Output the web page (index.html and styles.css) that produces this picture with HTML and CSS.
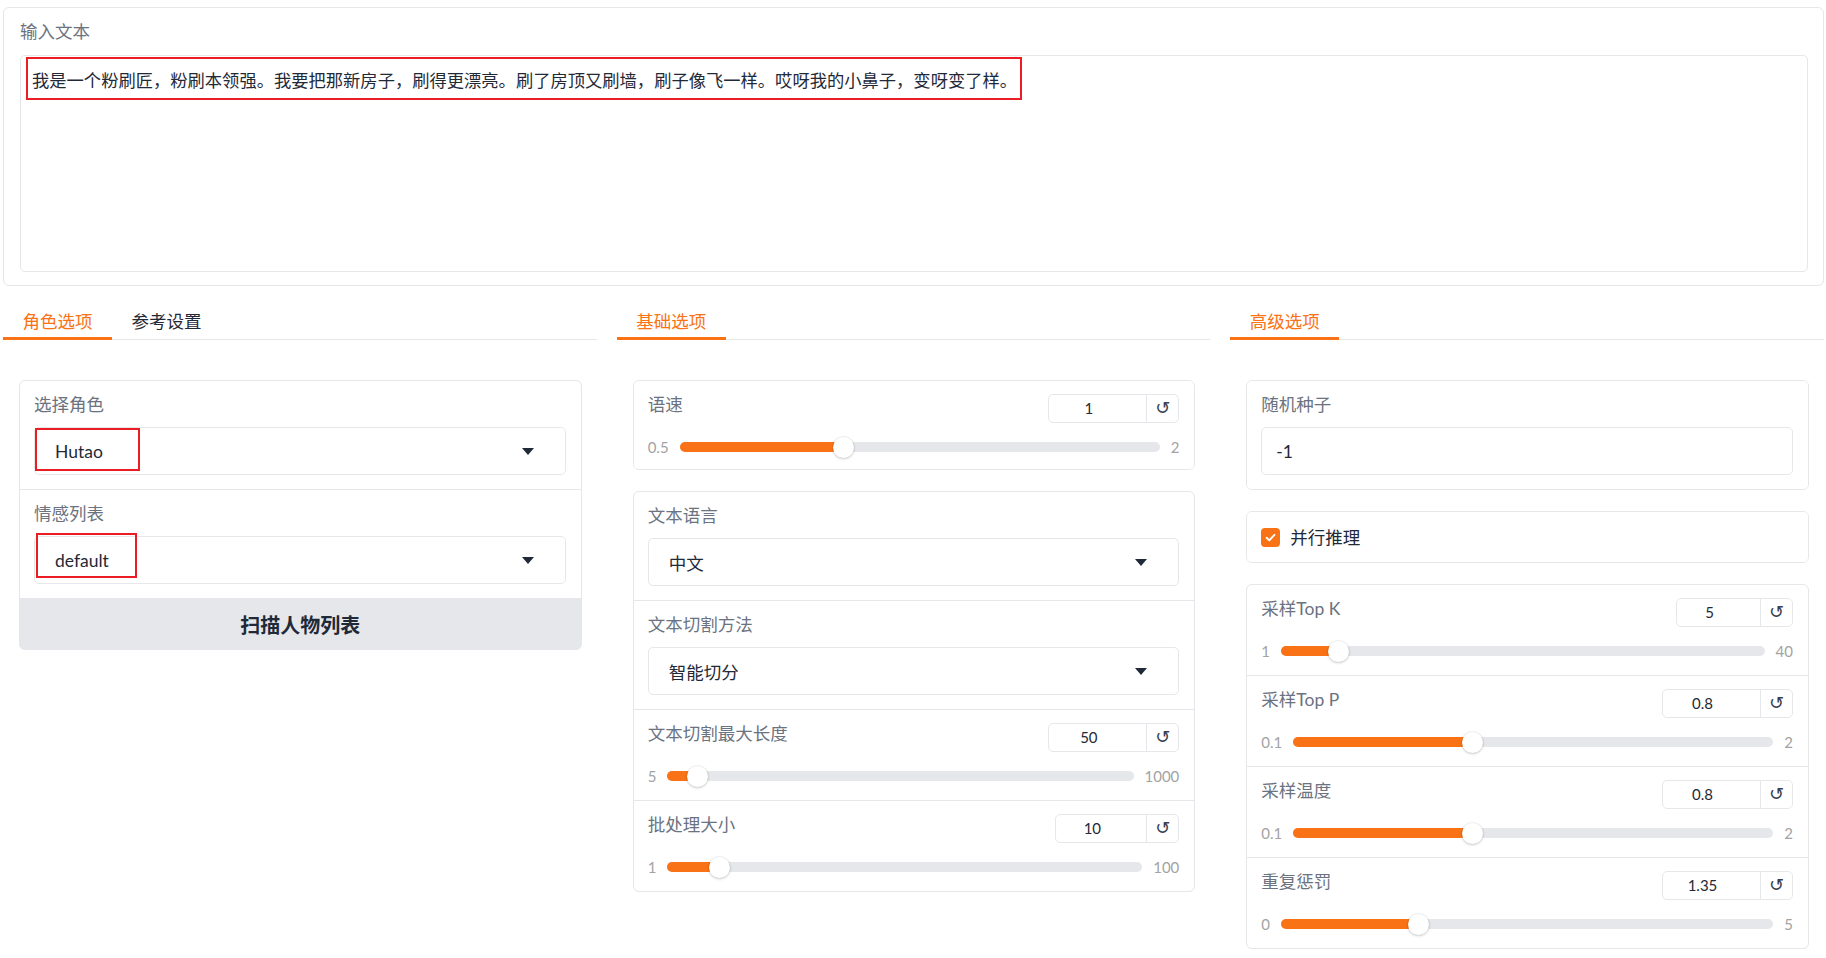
FILE: index.html
```html
<!DOCTYPE html>
<html lang="zh-CN">
<head>
<meta charset="utf-8">
<title>TTS</title>
<link rel="stylesheet" href="styles.css">
</head>
<body>
<div class="page">
  <div class="text-block">
    <div class="label">输入文本</div>
    <div class="textarea"><span class="hl">我是一个粉刷匠，粉刷本领强。我要把那新房子，刷得更漂亮。刷了房顶又刷墙，刷子像飞一样。哎呀我的小鼻子，变呀变了样。</span></div>
  </div>

  <div class="columns">
    <!-- column 1 -->
    <div class="col">
      <div class="tabs"><button class="tab active">角色选项</button><button class="tab">参考设置</button></div>
      <div class="tab-body">
        <div class="panel">
          <div class="field">
            <div class="label">选择角色</div>
            <div class="select"><span>Hutao</span><span class="caret"></span><span class="mark mark-a"></span></div>
          </div>
          <div class="field">
            <div class="label">情感列表</div>
            <div class="select"><span>default</span><span class="caret"></span><span class="mark mark-b"></span></div>
          </div>
          <button class="btn">扫描人物列表</button>
        </div>
      </div>
    </div>

    <!-- column 2 -->
    <div class="col">
      <div class="tabs"><button class="tab active">基础选项</button></div>
      <div class="tab-body stack">
        <div class="panel">
          <div class="field sfield solo">
            <div class="head"><div class="label">语速</div><div class="num"><span class="num-val">1</span><span class="num-reset">↺</span></div></div>
            <div class="slider"><span class="lim">0.5</span><div class="track" style="--p:0.3333"><div class="fill"></div><div class="thumb"></div></div><span class="lim">2</span></div>
          </div>
        </div>
        <div class="panel">
          <div class="field">
            <div class="label">文本语言</div>
            <div class="select"><span>中文</span><span class="caret"></span></div>
          </div>
          <div class="field">
            <div class="label">文本切割方法</div>
            <div class="select"><span>智能切分</span><span class="caret"></span></div>
          </div>
          <div class="field sfield">
            <div class="head"><div class="label">文本切割最大长度</div><div class="num"><span class="num-val">50</span><span class="num-reset">↺</span></div></div>
            <div class="slider"><span class="lim">5</span><div class="track" style="--p:0.0452"><div class="fill"></div><div class="thumb"></div></div><span class="lim">1000</span></div>
          </div>
          <div class="field sfield">
            <div class="head"><div class="label">批处理大小</div><div class="num w124"><span class="num-val">10</span><span class="num-reset">↺</span></div></div>
            <div class="slider"><span class="lim">1</span><div class="track" style="--p:0.0909"><div class="fill"></div><div class="thumb"></div></div><span class="lim">100</span></div>
          </div>
        </div>
      </div>
    </div>

    <!-- column 3 -->
    <div class="col">
      <div class="tabs"><button class="tab active">高级选项</button></div>
      <div class="tab-body stack">
        <div class="panel">
          <div class="field">
            <div class="label">随机种子</div>
            <div class="input">-1</div>
          </div>
        </div>
        <div class="panel">
          <div class="check-field">
            <span class="checkbox"><svg viewBox="0 0 16 16" width="13" height="13"><path d="M3.2 8.4 L6.5 11.5 L12.8 4.8" fill="none" stroke="#fff" stroke-width="2.4" stroke-linecap="round" stroke-linejoin="round"/></svg></span>
            <span class="check-label">并行推理</span>
          </div>
        </div>
        <div class="panel">
          <div class="field sfield">
            <div class="head"><div class="label">采样Top K</div><div class="num w117"><span class="num-val">5</span><span class="num-reset">↺</span></div></div>
            <div class="slider"><span class="lim">1</span><div class="track" style="--p:0.1026"><div class="fill"></div><div class="thumb"></div></div><span class="lim">40</span></div>
          </div>
          <div class="field sfield">
            <div class="head"><div class="label">采样Top P</div><div class="num"><span class="num-val">0.8</span><span class="num-reset">↺</span></div></div>
            <div class="slider"><span class="lim">0.1</span><div class="track" style="--p:0.3684"><div class="fill"></div><div class="thumb"></div></div><span class="lim">2</span></div>
          </div>
          <div class="field sfield">
            <div class="head"><div class="label">采样温度</div><div class="num"><span class="num-val">0.8</span><span class="num-reset">↺</span></div></div>
            <div class="slider"><span class="lim">0.1</span><div class="track" style="--p:0.3684"><div class="fill"></div><div class="thumb"></div></div><span class="lim">2</span></div>
          </div>
          <div class="field sfield">
            <div class="head"><div class="label">重复惩罚</div><div class="num"><span class="num-val">1.35</span><span class="num-reset">↺</span></div></div>
            <div class="slider"><span class="lim">0</span><div class="track" style="--p:0.27"><div class="fill"></div><div class="thumb"></div></div><span class="lim">5</span></div>
          </div>
        </div>
      </div>
    </div>
  </div>
</div>
</body>
</html>
```

FILE: styles.css
```css
* { box-sizing: border-box; }

body {
  margin: 0;
  background: #ffffff;
  font-family: Lato, "Noto Sans CJK SC", sans-serif;
  font-size: 17.5px;
  color: #1f2937;
}

.page {
  padding: 7px 2px 0 3px;
}

/* ---------- top text block ---------- */
.text-block {
  height: 279px;
  border: 1px solid #e5e7eb;
  border-radius: 6px;
  padding: 10px 15px 13px 16px;
}

.label {
  font-size: 17.5px;
  line-height: 27px;
  color: #6b7280;
  white-space: nowrap;
}

.textarea {
  height: 217px;
  margin-top: 10px;
  border: 1px solid #e5e7eb;
  border-radius: 5px;
  padding: 1px 0 0 5px;
}

.hl {
  display: block;
  width: 996px;
  height: 43px;
  border: 2px solid #ec1c24;
  padding: 4px 0 0 4px;
  font-size: 17.3px;
  line-height: 35px;
  white-space: nowrap;
  color: #1f2937;
}

/* ---------- columns & tabs ---------- */
.columns {
  display: grid;
  grid-template-columns: repeat(3, 1fr);
  column-gap: 20px;
  margin-top: 15px;
}

.tabs {
  display: flex;
  border-bottom: 1px solid #e5e7eb;
}

.tab {
  font-family: inherit;
  font-size: 17.5px;
  line-height: 27px;
  padding: 7px 19.5px 2px;
  margin: 0 0 -1px 0;
  background: none;
  border: 0;
  border-bottom: 3px solid transparent;
  color: #1f2937;
  cursor: pointer;
}

.tab.active {
  color: #f97316;
  border-bottom-color: #f97316;
}

.tab-body {
  padding: 40px 15px 0 16px;
}

.stack {
  display: flex;
  flex-direction: column;
  gap: 21px;
}

/* ---------- panels ---------- */
.panel {
  border: 1px solid #e5e7eb;
  border-radius: 6px;
  background: #e5e7eb;
  display: flex;
  flex-direction: column;
  gap: 1px;
  overflow: hidden;
}

.field {
  background: #ffffff;
  padding: 10px 15px 14px 14px;
}

.select {
  position: relative;
  height: 48px;
  margin-top: 9px;
  border: 1px solid #e5e7eb;
  border-radius: 5px;
  padding-left: 20px;
  display: flex;
  align-items: center;
  color: #1f2937;
  white-space: nowrap;
}

.caret {
  margin-left: auto;
  margin-right: 31px;
  width: 0;
  height: 0;
  border-left: 6px solid transparent;
  border-right: 6px solid transparent;
  border-top: 7px solid #1f2937;
}

.mark {
  position: absolute;
  border: 2px solid #ec1c24;
  pointer-events: none;
}

.mark-a { left: 0; top: 0; width: 105px; height: 43px; }
.mark-b { left: 1px; top: -4px; width: 101px; height: 45px; }

.input {
  height: 48px;
  margin-top: 9px;
  border: 1px solid #e5e7eb;
  border-radius: 5px;
  padding-left: 14px;
  display: flex;
  align-items: center;
  color: #1f2937;
}

.btn {
  display: block;
  width: 100%;
  height: 50px;
  border: 0;
  background: #e5e7eb;
  font-family: inherit;
  font-size: 20px;
  font-weight: 700;
  color: #1f2937;
  cursor: pointer;
}

/* ---------- slider fields ---------- */
.sfield {
  padding: 10px 15px 14px 14px;
}

.sfield.solo {
  padding-bottom: 12px;
}

.head {
  display: flex;
  justify-content: space-between;
  align-items: flex-start;
}

.num {
  display: flex;
  width: 131px;
  height: 29px;
  margin-top: 3px;
  border: 1px solid #e5e7eb;
  border-radius: 5px;
  font-size: 15px;
  line-height: 27px;
}

.num.w124 { width: 124px; }
.num.w117 { width: 117px; }

.num-val {
  flex: 1;
  text-align: center;
  padding-right: 18px;
  color: #1f2937;
}

.num-reset {
  width: 32px;
  border-left: 1px solid #e5e7eb;
  text-align: center;
  font-family: "DejaVu Sans", sans-serif;
  font-size: 18px;
  line-height: 26px;
  color: #374151;
}

.slider {
  display: flex;
  align-items: center;
  gap: 11px;
  height: 20px;
  margin-top: 14px;
}

.lim {
  font-size: 15px;
  line-height: 20px;
  color: #a3a3a3;
}

.track {
  flex: 1;
  position: relative;
  height: 10px;
  border-radius: 5px;
  background: #e5e7eb;
}

.fill {
  position: absolute;
  left: 0;
  top: 0;
  bottom: 0;
  width: calc(10px + var(--p) * (100% - 20px));
  background: #f97316;
  border-radius: 5px 0 0 5px;
}

.thumb {
  position: absolute;
  top: -5.5px;
  left: calc(var(--p) * (100% - 21px));
  width: 21px;
  height: 21px;
  border-radius: 50%;
  background: #ffffff;
  box-shadow: 0 0 0 1px rgba(0, 0, 0, 0.04), 0 1px 3px rgba(0, 0, 0, 0.18);
}

/* ---------- checkbox ---------- */
.check-field {
  background: #ffffff;
  padding: 11.5px 14px;
  display: flex;
  align-items: center;
  height: 50px;
}

.checkbox {
  width: 19px;
  height: 19px;
  border-radius: 4px;
  background: #f97316;
  display: flex;
  align-items: center;
  justify-content: center;
}

.check-label {
  margin-left: 10px;
  line-height: 27px;
  color: #1f2937;
}
```
